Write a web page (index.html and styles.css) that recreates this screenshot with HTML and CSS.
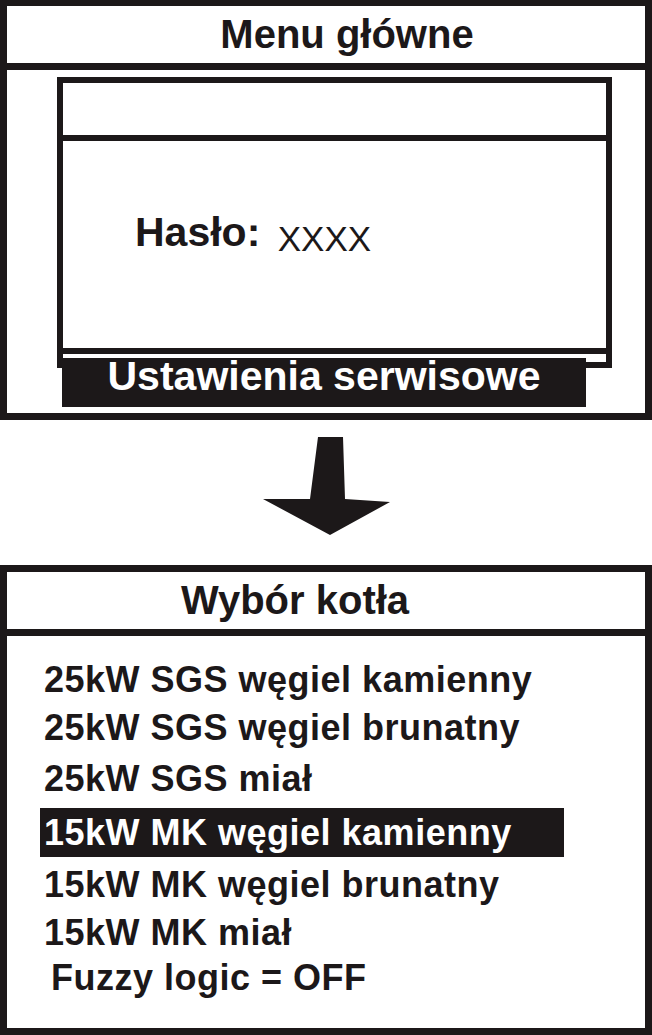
FILE: index.html
```html
<!DOCTYPE html>
<html lang="pl">
<head>
  <meta charset="UTF-8">
  <meta name="viewport" content="width=device-width, initial-scale=1">
  <title>Ustawienia serwisowe - wybór kotła</title>
  <link rel="stylesheet" href="styles.css">
</head>
<body>
  <!-- Main menu screen with password prompt -->
  <div class="screen">
    <h2 class="screen-title title-main">Menu główne</h2>
    <div class="screen-body">
      <div class="panel">
        <div class="panel-top"></div>
        <div class="panel-body">
          <span class="label">Hasło:</span> <span class="code">XXXX</span>
        </div>
        <div class="panel-foot"></div>
      </div>
      <div class="softkey">Ustawienia serwisowe</div>
    </div>
  </div>

  <!-- Transition arrow -->
  <div class="arrow">
    <svg width="652" height="145" viewBox="0 0 652 145">
      <polygon points="318,17 343,17 345,79 390,82 330,115 263,79 310,79" fill="#1c1819"/>
    </svg>
  </div>

  <!-- Boiler selection screen -->
  <div class="screen boiler">
    <h2 class="screen-title title-boiler">Wybór kotła</h2>
    <ul class="options">
      <li>25kW SGS węgiel kamienny</li>
      <li>25kW SGS węgiel brunatny</li>
      <li class="third">25kW SGS miał</li>
      <li class="selected">15kW MK węgiel kamienny</li>
      <li class="after-selected">15kW MK węgiel brunatny</li>
      <li>15kW MK miał</li>
      <li class="fuzzy">Fuzzy logic = OFF</li>
    </ul>
  </div>
</body>
</html>
```

FILE: styles.css
```css
/* Page */
body {
  margin: 0;
  width: 652px;
  background: #fff;
  color: #1c1819;
  font-family: "Liberation Sans", Arial, sans-serif;
}
/* Display frame */
.screen {
  border: 7px solid #1c1819;
}
.screen:first-child {
  border-top-width: 6px;
}
.screen-title {
  margin: 0;
  height: 57px;
  line-height: 57px;
  font-size: 40px;
  font-weight: bold;
  text-align: center;
  border-bottom: 7px solid #1c1819;
}
.title-main {
  padding-left: 42px;
}
.title-boiler {
  padding-right: 62px;
}
.screen-body {
  padding: 7px 33px 6px 50px;
}
/* Password panel */
.panel {
  border: 6px solid #1c1819;
}
.panel-top {
  height: 52px;
  border-bottom: 6px solid #1c1819;
}
.panel-body {
  height: 140px;
  padding: 67px 0 0 72px;
  border-bottom: 6px solid #1c1819;
  line-height: 48px;
  font-size: 41px;
  font-weight: bold;
  white-space: nowrap;
}
.code {
  margin-left: 6px;
  font-size: 35px;
  font-weight: normal;
  vertical-align: -5px;
}
.panel-foot {
  height: 8px;
}
/* Softkey label overlapping the panel bottom */
.softkey {
  margin: -10px 0 0 5px;
  width: 524px;
  height: 37px;
  padding-bottom: 12px;
  line-height: 37px;
  background: #1c1819;
  color: #fff;
  font-size: 41px;
  font-weight: bold;
  text-align: center;
  white-space: nowrap;
}
.arrow {
  height: 145px;
}
.arrow svg {
  display: block;
}
/* Boiler list */
.options {
  list-style: none;
  margin: 0;
  padding: 20px 0 26px 33px;
  font-size: 36px;
  font-weight: bold;
  letter-spacing: 0.5px;
}
.options li {
  height: 48px;
  line-height: 48px;
  padding-left: 4px;
  white-space: nowrap;
}
.options li.third {
  margin-top: 3px;
}
.options li.selected {
  width: 520px;
  height: 49px;
  line-height: 49px;
  margin-top: 5px;
  background: #1c1819;
  color: #fff;
}
.options li.after-selected {
  margin-top: 4px;
}
.options li.fuzzy {
  margin-top: -3px;
  padding-left: 11px;
}
```
